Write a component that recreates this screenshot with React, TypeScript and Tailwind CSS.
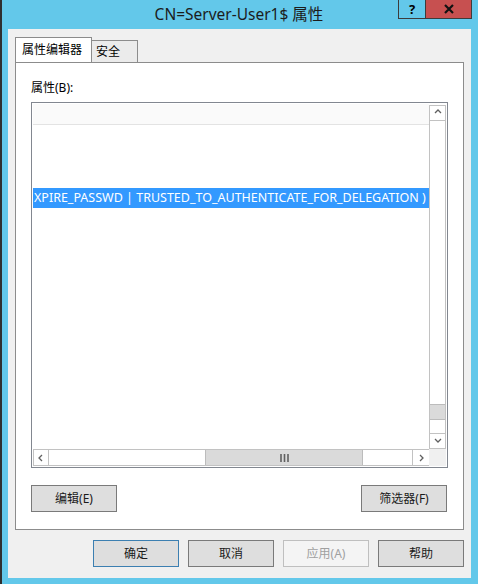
import React from "react";

const font = "font-['Noto_Sans','Noto_Sans_CJK_SC',sans-serif]";

function Btn({
  label,
  primary,
  disabled,
}: {
  label: string;
  primary?: boolean;
  disabled?: boolean;
}) {
  let cls = "border-[#7a7a7a] bg-[#dedede] text-[#1a1a1a]";
  if (primary) cls = "border-[#3c7fb1] bg-[#dedede] text-[#1a1a1a]";
  if (disabled) cls = "border-[#bfbfbf] bg-[#f4f4f4] text-[#a0a0a0]";
  return (
    <div
      className={`w-[86px] h-[27px] border flex items-center justify-center text-[12px] ${cls}`}
    >
      {label}
    </div>
  );
}

function ArrowBox({ dir }: { dir: "up" | "down" | "left" | "right" }) {
  const paths = {
    up: "M3 6 L6 3 L9 6",
    down: "M3 4 L6 7 L9 4",
    left: "M7 3 L4 6 L7 9",
    right: "M5 3 L8 6 L5 9",
  };
  return (
    <div className="w-full h-full flex items-center justify-center bg-white">
      <svg width="12" height="12" viewBox="0 0 12 12">
        <path d={paths[dir]} stroke="#606060" strokeWidth="1.3" fill="none" />
      </svg>
    </div>
  );
}

export default function App() {
  return (
    <div
      className={`w-[478px] h-[584px] bg-[#63c8ea] border-l-2 border-[#2f2f2f] flex flex-col ${font} overflow-hidden`}
    >
      {/* title bar */}
      <div className="relative h-[29px] shrink-0">
        <div className="absolute left-[-2px] w-[478px] top-[4px] text-center text-[15.5px] leading-[20px] text-[#1c1c1c]">
          CN=Server-User1$ 属性
        </div>
        <div className="absolute top-0 left-[396px] flex">
          <div className="w-[28px] h-[19px] border-l border-r border-b border-[#3c3c3c] flex items-center justify-center text-[13px] font-bold leading-none text-black">
            ?
          </div>
          <div className="w-[46px] h-[19px] bg-[#c75050] border-b border-r border-[#3c3c3c] flex items-center justify-center">
            <svg width="12" height="10" viewBox="0 0 12 10">
              <path d="M2 1 L10 9 M10 1 L2 9" stroke="#111" strokeWidth="2.2" />
            </svg>
          </div>
        </div>
      </div>

      {/* client area */}
      <div className="ml-[6px] w-[463px] h-[549px] bg-[#f0f0f0] flex flex-col pl-[7px] pt-[9px]">
        {/* tabs */}
        <div className="flex items-end h-[24px] relative z-10">
          <div className="w-[77px] h-[25px] bg-white border border-b-0 border-[#8c8c8c] text-[12px] pl-[6px] pt-[3px] text-black">
            属性编辑器
          </div>
          <div className="w-[46px] h-[22px] bg-[#ebebeb] border border-l-0 border-b-0 border-[#8c8c8c] text-[12px] pl-[4px] pt-[2px] text-black">
            安全
          </div>
        </div>
        {/* panel */}
        <div className="w-[449px] h-[468px] bg-white border border-[#8c8c8c] flex flex-col pl-[15px] pt-[16px]">
          <div className="text-[12px] leading-[18px] text-black">属性(B):</div>

          {/* list box */}
          <div className="mt-[5px] w-[417px] h-[366px] border border-[#828790] p-px flex flex-col">
            <div className="flex flex-1 min-h-0">
              <div className="flex-1 flex flex-col overflow-hidden">
                <div className="h-[21px] bg-[#fafafa] border-b border-[#e3e3e3] shrink-0" />
                <div className="h-[63px] shrink-0" />
                <div className="h-[20px] bg-[#3399ff] text-white text-[12.5px] leading-[20px] whitespace-nowrap pl-px">
                  XPIRE_PASSWD | TRUSTED_TO_AUTHENTICATE_FOR_DELEGATION )
                </div>
              </div>
              {/* vertical scrollbar */}
              <div className="w-[17px] flex flex-col">
                <div className="h-[16px] mt-px border border-[#c2c2c2]">
                  <ArrowBox dir="up" />
                </div>
                <div className="flex-1 border-x border-[#c2c2c2] bg-white flex flex-col justify-end pb-[13px]">
                  <div className="h-[16px] bg-[#dadada] border-y border-[#bcbcbc]" />
                </div>
                <div className="h-[16px] border border-[#c2c2c2]">
                  <ArrowBox dir="down" />
                </div>
              </div>
            </div>
            {/* horizontal scrollbar */}
            <div className="h-[17px] flex shrink-0">
              <div className="flex-1 flex border-y border-[#c2c2c2]">
                <div className="w-[16px] border-x border-[#c2c2c2]">
                  <ArrowBox dir="left" />
                </div>
                <div className="w-[156px] bg-white" />
                <div className="w-[158px] bg-[#dadada] border-x border-[#bcbcbc] flex items-center justify-center">
                  <svg width="9" height="8" viewBox="0 0 9 8">
                    <path d="M1 0 V8 M4.5 0 V8 M8 0 V8" stroke="#606060" strokeWidth="1.6" />
                  </svg>
                </div>
                <div className="flex-1 bg-white" />
                <div className="w-[17px] border-l border-[#c2c2c2]">
                  <ArrowBox dir="right" />
                </div>
              </div>
              <div className="w-[17px] bg-[#f0f0f0]" />
            </div>
          </div>

          {/* panel buttons */}
          <div className="mt-[17px] w-[416px] flex justify-between">
            <Btn label="编辑(E)" />
            <Btn label="筛选器(F)" />
          </div>
        </div>

        {/* dialog buttons */}
        <div className="mt-[10px] w-[449px] flex justify-end gap-[9px]">
          <Btn label="确定" primary />
          <Btn label="取消" />
          <Btn label="应用(A)" disabled />
          <Btn label="帮助" />
        </div>
      </div>
    </div>
  );
}
